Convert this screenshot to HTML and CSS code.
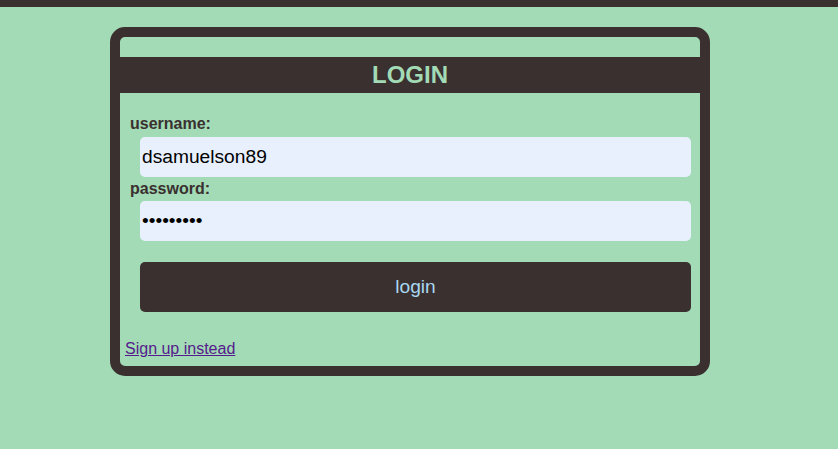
FILE: index.html
```html
<!DOCTYPE html>
<html>
<head>
<meta charset="utf-8">
<link rel="stylesheet" href="styles.css">
</head>
<body>
<div class="topbar"></div>
<div class="card">
  <h1 class="title">LOGIN</h1>
  <form class="form">
    <label class="label">username:</label>
    <input class="field" type="text" value="dsamuelson89">
    <label class="label pw">password:</label>
    <input class="field" type="password" value="123456789">
    <button class="btn" type="button">login</button>
  </form>
  <a class="link" href="#">Sign up instead</a>
</div>
</body>
</html>
```
FILE: styles.css
```css
html, body {
  margin: 0;
  padding: 0;
  background: #a2dbb5;
  font-family: "Liberation Sans", Arial, sans-serif;
}
.topbar {
  height: 7px;
  background: #3a3030;
}
.card {
  margin: 20px 0 0 110px;
  width: 580px;
  border: 10px solid #3a3030;
  border-radius: 15px;
  padding: 20px 0 8px;
  display: flex;
  flex-direction: column;
}
.title {
  margin: 0;
  height: 36px;
  line-height: 36px;
  background: #3a3030;
  color: #a2dbb5;
  text-align: center;
  font-size: 24px;
  font-weight: bold;
}
.form {
  display: flex;
  flex-direction: column;
  padding: 22px 9px 0 10px;
}
.label {
  font-size: 16px;
  font-weight: bold;
  color: #3a3030;
  line-height: 18px;
  margin-bottom: 4px;
}
.label.pw {
  margin-top: 3px;
  margin-bottom: 3px;
}
.field {
  margin-left: 10px;
  height: 40px;
  box-sizing: border-box;
  border: none;
  border-radius: 5px;
  background: #e8f0fe;
  padding: 0 2px;
  font-family: "Liberation Sans", Arial, sans-serif;
  font-size: 19.2px;
  color: #000;
  outline: none;
}
.btn {
  margin: 21px 0 0 10px;
  height: 50px;
  border: none;
  border-radius: 5px;
  background: #3a3030;
  color: #a8d8f0;
  font-family: "Liberation Sans", Arial, sans-serif;
  font-size: 19.2px;
}
.link {
  margin: 28px 0 0 5px;
  font-size: 16px;
  line-height: 18px;
  color: #551a8b;
  align-self: flex-start;
}
```
